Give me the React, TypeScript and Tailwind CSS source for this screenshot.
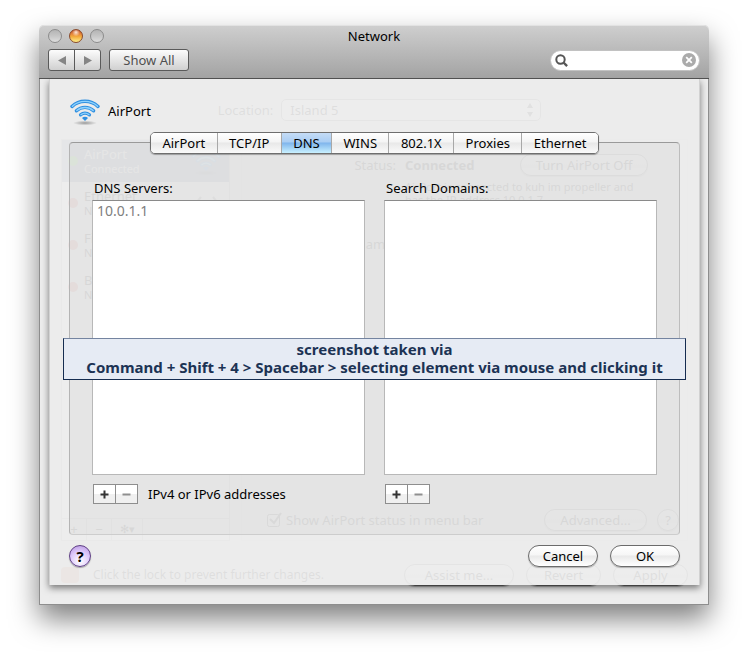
import React, { useState } from "react"
import { clsx } from "clsx"

const TABS = ["AirPort", "TCP/IP", "DNS", "WINS", "802.1X", "Proxies", "Ethernet"]

const SERVICES = [
  { name: "AirPort", state: "Connected", dot: "bg-[#5fd03a]", active: true },
  { name: "Ethernet", state: "Not Connected", dot: "bg-[#e8605a]", active: false },
  { name: "FireWire", state: "Not Connected", dot: "bg-[#e8605a]", active: false },
  { name: "Bluetooth", state: "Not Connected", dot: "bg-[#e8605a]", active: false },
]

const WifiIcon = () => (
  <svg width="30" height="30" viewBox="0 0 30 30" fill="none" aria-hidden="true">
    <defs>
      <radialGradient id="wifi-shadow">
        <stop offset="0" stopColor="#000" stopOpacity="0.35" />
        <stop offset="1" stopColor="#000" stopOpacity="0" />
      </radialGradient>
    </defs>
    <ellipse cx="15" cy="27" rx="12" ry="2.4" fill="url(#wifi-shadow)" />
    <g stroke="#2f8fe0" strokeWidth="3.4" strokeLinecap="round">
      <path d="M2 10.4C9.2 3.6 20.8 3.6 28 10.4" />
      <path d="M6.4 14.8C11.2 10.2 18.8 10.2 23.6 14.8" />
      <path d="M10.6 18.8C13.2 16.6 16.8 16.6 19.4 18.8" />
    </g>
    <g stroke="#8fd2fd" strokeWidth="1.4" strokeLinecap="round">
      <path d="M2.4 10.2C9.4 3.8 20.6 3.8 27.6 10.2" />
      <path d="M6.8 14.6C11.4 10.4 18.6 10.4 23.2 14.6" />
      <path d="M11 18.6C13.4 16.8 16.6 16.8 19 18.6" />
    </g>
    <path d="M12 22C13.8 20.4 16.2 20.4 18 22L15 25Z" fill="#2f8fe0" />
  </svg>
)

const Light = ({ label, on }: { label: string; on?: boolean }) => (
  <button
    aria-label={label}
    className={clsx(
      "size-[14px] rounded-full border",
      on
        ? "border-[#8a4a2a] bg-[radial-gradient(circle_at_50%_20%,#ffe9d8_0%,transparent_35%),linear-gradient(#b8421c_0%,#e88a3c_35%,#f3aa3c_55%,#fff08a_100%)]"
        : "border-[#8c8c8c] bg-[linear-gradient(#b4b4b4,#c6c6c6_50%,#dedede)]"
    )}
  />
)

const PlusMinus = ({ name }: { name: string }) => (
  <div className="flex h-5 w-[45px] border border-[#8e8e8e] bg-[linear-gradient(#fff_50%,#f0f0f0_50%)]">
    <button aria-label={`Add ${name}`} className="flex flex-1 items-center justify-center border-r border-[#8e8e8e]">
      <svg width="9" height="9" viewBox="0 0 9 9">
        <path d="M4.5 0.5v8M0.5 4.5h8" stroke="#333" strokeWidth="2" />
      </svg>
    </button>
    <button aria-label={`Remove ${name}`} className="flex flex-1 items-center justify-center">
      <svg width="9" height="9" viewBox="0 0 9 9">
        <path d="M0.5 4.5h8" stroke="#8f8f8f" strokeWidth="2" />
      </svg>
    </button>
  </div>
)

const PillButton = ({ children, className }: { children: React.ReactNode; className?: string }) => (
  <button
    className={clsx(
      "flex h-[22px] items-center justify-center rounded-full border border-[#6b6b6b] bg-[linear-gradient(#fff,#f6f6f6_45%,#e9e9e9_50%,#fff)] shadow-[0_1px_1px_rgba(0,0,0,0.25)]",
      className
    )}
  >
    {children}
  </button>
)

// Main preference pane, it sits behind the sheet
const NetworkPane = () => (
  <div inert className="col-start-1 row-start-1 flex flex-col pt-5 pr-5 pb-[18px] pl-[21px]">
    <div className="flex items-center justify-center gap-2 pl-[10px]">
      <span>Location:</span>
      <div className="flex h-[22px] w-[260px] items-center rounded-[5px] border border-[#777] bg-[#fafafa] pl-2">
        <span className="flex-1">Island 5</span>
        <svg width="20" height="16" viewBox="0 0 20 16" fill="#333">
          <path d="M10 1l3 5H7zM10 15l3-5H7z" />
        </svg>
      </div>
    </div>

    <div className="mt-[18px] flex flex-1 gap-[11px]">
      <div className="flex w-[169px] flex-col border border-[#bbb] bg-[#f6f6f6]">
        {SERVICES.map((s) => (
          <div
            key={s.name}
            className={clsx("flex h-[42px] items-center gap-[6px] pl-[6px]", s.active && "bg-[#7486a3] text-white")}
          >
            <span className={clsx("size-[10px] rounded-full", s.dot)} />
            <div className="flex-1">
              <div className="leading-[16px]">{s.name}</div>
              <div className="text-[11px] leading-[14px]">{s.state}</div>
            </div>
            {s.active && (
              <div className="mr-2">
                <WifiIcon />
              </div>
            )}
            {s.name === "Ethernet" && (
              <svg width="24" height="14" viewBox="0 0 24 14" fill="none" stroke="#777" strokeWidth="2" className="mr-[10px]">
                <path d="M6 1L1 7l5 6M18 1l5 6-5 6" />
              </svg>
            )}
          </div>
        ))}
        <div className="mt-auto flex h-[22px] border-t border-[#bbb] text-center leading-[20px]">
          <span className="w-[25px] border-r border-[#bbb]">+</span>
          <span className="w-[25px] border-r border-[#bbb]">−</span>
          <span className="w-[31px] border-r border-[#bbb] text-[11px]">✻▾</span>
        </div>
      </div>

      <div className="flex flex-1 flex-col border border-[#d8d8d8] bg-[#e6e6e6] pt-[14px] pb-[9px]">
        <div className="grid grid-cols-[154px_1fr] gap-x-[9px]">
          <span className="self-center text-right">Status:</span>
          <div className="flex items-center justify-between pr-[39px]">
            <span className="font-bold">Connected</span>
            <PillButton className="w-32">Turn AirPort Off</PillButton>
          </div>
          <p className="col-start-2 mt-[4px] text-[11px] leading-[13px]">
            AirPort is connected to kuh im propeller and
            <br />
            has the IP address 10.0.1.7.
          </p>
          <span className="mt-[29px] text-right">Network Name:</span>
        </div>
        <div className="mt-auto flex items-center gap-1 pr-[8px] pl-[25px]">
          <svg width="15" height="16" viewBox="0 0 15 16" fill="none" stroke="#333">
            <rect x="0.5" y="2.5" width="12" height="12" rx="2" />
            <path d="M3 7l4 4 7-10" strokeWidth="2" />
          </svg>
          <span className="flex-1">Show AirPort status in menu bar</span>
          <PillButton className="mr-[6px] w-[103px]">Advanced...</PillButton>
          <PillButton className="w-[22px]">?</PillButton>
        </div>
      </div>
    </div>

    <div className="mt-[23px] flex items-center">
      <span className="h-4 w-[18px] rounded-sm bg-[#d88a66]" />
      <span className="ml-[14px] flex-1 text-[12px]">Click the lock to prevent further changes.</span>
      <PillButton className="w-[110px]">Assist me...</PillButton>
      <PillButton className="ml-3 w-[75px]">Revert</PillButton>
      <PillButton className="ml-3 w-[75px]">Apply</PillButton>
    </div>
  </div>
)

const DnsSheet = () => {
  const [tab, setTab] = useState("DNS")

  return (
    <div className="relative col-start-1 row-start-1 mr-2 mb-[19px] ml-[9px] flex flex-col border-x border-[#d2d2d2] bg-[#ececec]/94 px-[19px] pt-[17px] pb-[18px] shadow-[0_3px_7px_rgba(0,0,0,0.5)] [clip-path:inset(0_-10px_-20px_-10px)]">
      <div className="flex items-center gap-2 pl-px">
        <WifiIcon />
        <span>AirPort</span>
      </div>

      <div role="tablist" className="z-10 mt-[6px] flex h-[22px] w-[449px] self-center overflow-hidden rounded-[5px] border border-[#6e6e6e] shadow-[0_1px_1px_rgba(0,0,0,0.3)]">
        {TABS.map((t) => (
          <button
            key={t}
            role="tab"
            aria-selected={t === tab}
            onClick={() => setTab(t)}
            className={clsx(
              "grow border-r border-[#a8a8a8] px-[11px] leading-[20px] last:border-r-0",
              t === tab
                ? "bg-[linear-gradient(#c5dcf6,#a9cdf3_45%,#7fb5ec_50%,#c9f1ff)]"
                : "bg-[linear-gradient(#fff,#f4f4f4_45%,#e8e8e8_50%,#fafafa)]"
            )}
          >
            {t}
          </button>
        ))}
      </div>

      <div className="-mt-[12px] rounded-[4px] border border-t-[#9a9a9a] border-r-[#bdbdbd] border-b-[#cdcdcd] border-l-[#b4b4b4] bg-black/3 px-[22px] pt-[36px] pb-[30px]">
        <div className="flex gap-[19px]">
          <div className="flex flex-1 flex-col">
            <label htmlFor="dns-servers" className="pl-[2px] leading-[18px]">
              DNS Servers:
            </label>
            <textarea
              id="dns-servers"
              defaultValue="10.0.1.1"
              className="mt-[3px] h-[275px] resize-none border border-[#b8b8b8] border-t-[#8a8a8a] bg-white px-1 py-px text-[14px] leading-[18px] text-[#808080] outline-none"
            />
            <div className="mt-[9px] flex items-center gap-[10px] pl-px">
              <PlusMinus name="DNS server" />
              <span className="leading-[20px]">IPv4 or IPv6 addresses</span>
            </div>
          </div>
          <div className="flex flex-1 flex-col">
            <label htmlFor="search-domains" className="pl-[2px] leading-[18px]">
              Search Domains:
            </label>
            <textarea
              id="search-domains"
              className="mt-[3px] h-[275px] resize-none border border-[#b8b8b8] border-t-[#8a8a8a] bg-white px-1 py-px text-[14px] leading-[18px] text-[#808080] outline-none"
            />
            <div className="mt-[9px] pl-px">
              <PlusMinus name="search domain" />
            </div>
          </div>
        </div>
      </div>

      <div className="mt-[10px] flex items-center gap-3">
        <button
          aria-label="Help"
          className="mr-auto size-[22px] rounded-full border border-[#5f3f86] bg-[radial-gradient(circle_at_50%_75%,#fff,#dcc6fa_55%,#b391dd)] text-[15px] leading-[20px] font-bold shadow-[0_1px_1px_rgba(0,0,0,0.3)]"
        >
          ?
        </button>
        <PillButton className="w-[70px]">Cancel</PillButton>
        <PillButton className="w-[70px]">OK</PillButton>
      </div>

      {/* Caption across the sheet */}
      <div className="absolute inset-x-[13px] top-[259px] z-20 border border-[#152c50] border-t-[#7484a0] bg-[#e6ebf4] pt-px pb-[3px] text-center text-[15px] leading-[18px] font-bold text-[#1c3354]">
        screenshot taken via
        <br />
        Command + Shift + 4 &gt; Spacebar &gt; selecting element via mouse and clicking it
      </div>
    </div>
  )
}

export default function App() {
  return (
    <main className="min-h-screen bg-white px-[39px] pt-[25px] pb-[54px] font-['Lucida_Grande','Noto_Sans',sans-serif] text-[13px] leading-[18px] text-black">
      <div className="rounded-t-[5px] shadow-[0_14px_28px_rgba(0,0,0,0.5)]">
        <header className="rounded-t-[5px] border-b border-[#515151] bg-[linear-gradient(#cfcfcf,#a3a3a3)] px-[9px] pb-[7px] shadow-[inset_0_1px_0_#e2e2e2]">
          <div className="mb-[2px] grid h-[22px] grid-cols-[1fr_auto_1fr] items-center">
            <div className="flex gap-[7px]">
              <Light label="Close" />
              <Light label="Minimize" on />
              <Light label="Zoom" />
            </div>
            <h1>Network</h1>
          </div>
          <div className="flex items-center gap-2">
            <div className="flex h-[22px] w-[53px] rounded-[3px] border border-[#5a5a5a] bg-[linear-gradient(#fcfcfc,#d0d0d0)]">
              <button aria-label="Back" className="flex flex-1 items-center justify-center border-r border-[#5a5a5a]">
                <svg width="8" height="9" viewBox="0 0 8 9" fill="#858585">
                  <path d="M8 0v9L0 4.5z" />
                </svg>
              </button>
              <button aria-label="Forward" className="flex flex-1 items-center justify-center">
                <svg width="8" height="9" viewBox="0 0 8 9" fill="#858585">
                  <path d="M0 0v9l8-4.5z" />
                </svg>
              </button>
            </div>
            <button className="h-[22px] w-20 rounded-[3px] border border-[#5a5a5a] bg-[linear-gradient(#fcfcfc,#d0d0d0)] leading-[20px] text-[#505050]">
              Show All
            </button>
            <div className="ml-auto flex h-[21px] w-[150px] items-center rounded-full border border-[#c2c2c2] bg-white pr-[3px] pl-1">
              <svg width="13" height="13" viewBox="0 0 13 13" fill="none" stroke="#555">
                <circle cx="5.5" cy="5.5" r="4.2" strokeWidth="2" />
                <path d="M8.5 8.5l3.6 3.6" strokeWidth="2.4" />
              </svg>
              <input aria-label="Search" className="min-w-0 flex-1 px-1 outline-none" />
              <button aria-label="Clear search">
                <svg width="14" height="14" viewBox="0 0 14 14">
                  <circle cx="7" cy="7" r="7" fill="#ababab" />
                  <path d="M4.2 4.2l5.6 5.6M9.8 4.2l-5.6 5.6" stroke="#fff" strokeWidth="1.8" />
                </svg>
              </button>
            </div>
          </div>
        </header>

        <div className="grid border border-t-0 border-[#8e8e8e] bg-[#ededed]">
          <NetworkPane />
          <DnsSheet />
        </div>
      </div>
    </main>
  )
}
